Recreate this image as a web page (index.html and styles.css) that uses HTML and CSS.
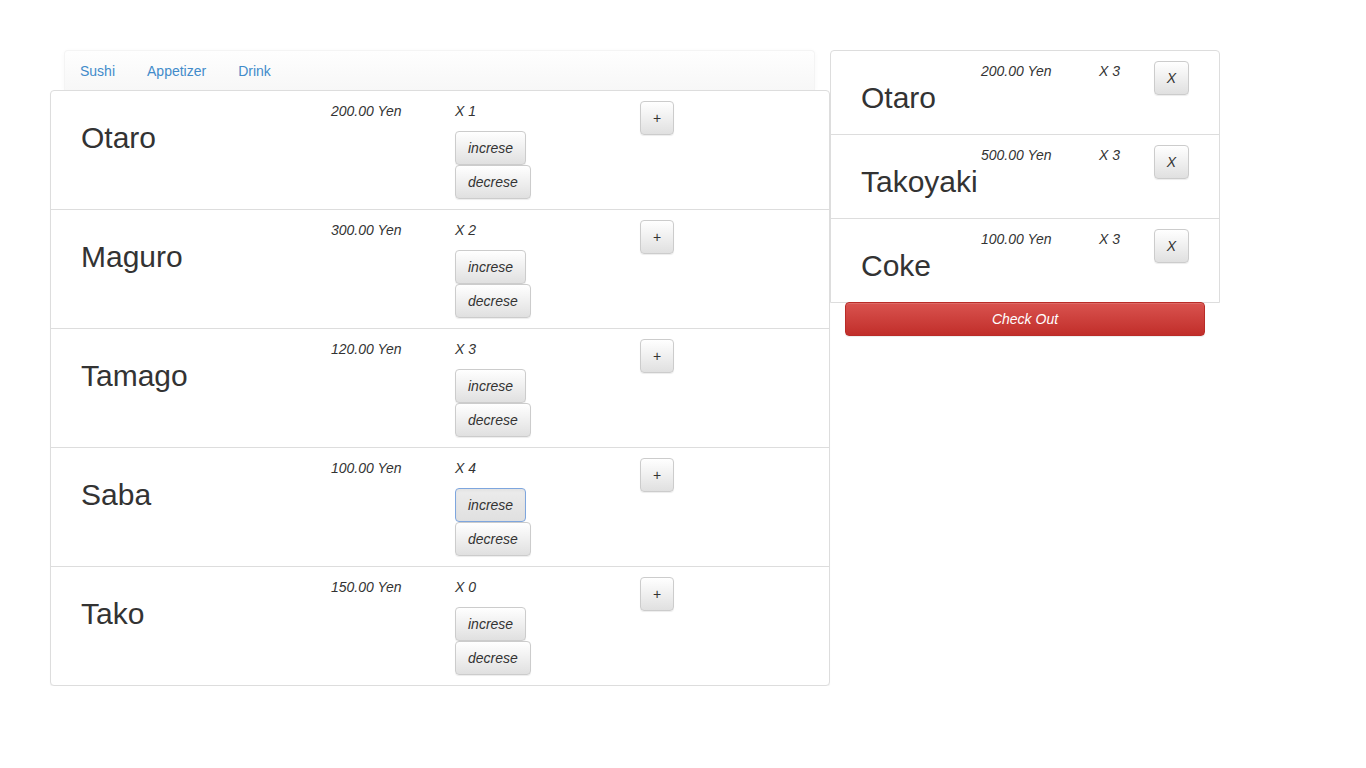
FILE: index.html
```html
<!DOCTYPE html>
<html>
<head>
<meta charset="utf-8">
<link rel="stylesheet" href="styles.css">
</head>
<body>
<div class="page">
  <div class="menu-col">
    <nav class="navbar">
      <a class="nav-link" href="#">Sushi</a>
      <a class="nav-link" href="#">Appetizer</a>
      <a class="nav-link" href="#">Drink</a>
    </nav>
    <div class="panel menu-panel">
      <div class="menu-row">
        <h2 class="item-name">Otaro</h2>
        <p class="price">200.00 Yen</p>
        <div class="qty">
          <p class="qty-text">X 1</p>
          <button class="btn">increse</button>
          <button class="btn">decrese</button>
        </div>
        <div><button class="btn btn-plus">+</button></div>
      </div>
      <div class="menu-row">
        <h2 class="item-name">Maguro</h2>
        <p class="price">300.00 Yen</p>
        <div class="qty">
          <p class="qty-text">X 2</p>
          <button class="btn">increse</button>
          <button class="btn">decrese</button>
        </div>
        <div><button class="btn btn-plus">+</button></div>
      </div>
      <div class="menu-row">
        <h2 class="item-name">Tamago</h2>
        <p class="price">120.00 Yen</p>
        <div class="qty">
          <p class="qty-text">X 3</p>
          <button class="btn">increse</button>
          <button class="btn">decrese</button>
        </div>
        <div><button class="btn btn-plus">+</button></div>
      </div>
      <div class="menu-row">
        <h2 class="item-name">Saba</h2>
        <p class="price">100.00 Yen</p>
        <div class="qty">
          <p class="qty-text">X 4</p>
          <button class="btn btn-focus">increse</button>
          <button class="btn">decrese</button>
        </div>
        <div><button class="btn btn-plus">+</button></div>
      </div>
      <div class="menu-row">
        <h2 class="item-name">Tako</h2>
        <p class="price">150.00 Yen</p>
        <div class="qty">
          <p class="qty-text">X 0</p>
          <button class="btn">increse</button>
          <button class="btn">decrese</button>
        </div>
        <div><button class="btn btn-plus">+</button></div>
      </div>
    </div>
  </div>
  <div class="cart-col">
    <div class="panel cart-panel">
      <div class="cart-row">
        <h2 class="item-name">Otaro</h2>
        <p class="price">200.00 Yen</p>
        <p class="qty-text">X 3</p>
        <div><button class="btn btn-x">X</button></div>
      </div>
      <div class="cart-row">
        <h2 class="item-name">Takoyaki</h2>
        <p class="price">500.00 Yen</p>
        <p class="qty-text">X 3</p>
        <div><button class="btn btn-x">X</button></div>
      </div>
      <div class="cart-row">
        <h2 class="item-name">Coke</h2>
        <p class="price">100.00 Yen</p>
        <p class="qty-text">X 3</p>
        <div><button class="btn btn-x">X</button></div>
      </div>
    </div>
    <button class="btn btn-danger">Check Out</button>
  </div>
</div>
</body>
</html>
```

FILE: styles.css
```css
* { box-sizing: border-box; }

html, body {
  margin: 0;
  padding: 0;
  background: #fff;
}

body {
  font-family: "Liberation Sans", Arial, sans-serif;
  font-size: 14px;
  line-height: 20px;
  color: #333;
}

.page {
  display: flex;
  align-items: flex-start;
  padding: 50px 0 0 50px;
}

.menu-col {
  width: 780px;
  display: flex;
  flex-direction: column;
}

.navbar {
  height: 40px;
  margin: 0 15px 0 14px;
  border: 1px solid #f4f4f4;
  border-bottom: none;
  border-radius: 4px 4px 0 0;
  background: linear-gradient(to bottom, #fefefe 0, #f7f7f7 100%);
  box-shadow: 0 1px 5px rgba(0, 0, 0, 0.03);
  display: flex;
  align-items: flex-start;
  padding: 10px 0 0 0;
}

.nav-link {
  color: #428bca;
  text-decoration: none;
  padding: 0 16px;
  line-height: 20px;
}

.nav-link:first-child {
  padding-left: 15px;
}

.panel {
  background: #fff;
  border: 1px solid #ddd;
  border-radius: 4px;
  box-shadow: 0 1px 1px rgba(0, 0, 0, 0.05);
}

.menu-row {
  display: grid;
  grid-template-columns: 250px 124px 185px 1fr;
  align-items: start;
  padding: 10px 30px;
}

.menu-row + .menu-row,
.cart-row + .cart-row {
  border-top: 1px solid #ddd;
}

.item-name {
  margin: 20px 0 10px;
  font-size: 30px;
  line-height: 33px;
  font-weight: normal;
  color: #333;
  white-space: nowrap;
}

.price,
.qty-text {
  margin: 0;
  font-style: italic;
  line-height: 20px;
}

.qty {
  display: flex;
  flex-direction: column;
  align-items: flex-start;
}

.qty .qty-text {
  margin-bottom: 10px;
}

.btn {
  display: inline-block;
  font-family: "Liberation Sans", Arial, sans-serif;
  font-size: 14px;
  font-style: italic;
  line-height: 20px;
  padding: 6px 12px;
  color: #333;
  border: 1px solid #ccc;
  border-radius: 4px;
  background: linear-gradient(to bottom, #fff 0, #e0e0e0 100%);
  box-shadow: inset 0 1px 0 rgba(255, 255, 255, 0.15), 0 1px 1px rgba(0, 0, 0, 0.075);
  cursor: pointer;
  margin: 0;
}

.btn-plus {
  font-style: normal;
  padding: 6px 12px;
  width: 34px;
  text-align: center;
}

.btn-focus {
  border-color: #7ea6de;
  background: linear-gradient(to bottom, #ececec 0, #e0e0e0 100%);
  box-shadow: inset 0 2px 3px rgba(0, 0, 0, 0.04);
}

.cart-col {
  width: 390px;
  display: flex;
  flex-direction: column;
}

.cart-panel {
  border-radius: 4px 4px 0 0;
  box-shadow: none;
}

.cart-row {
  display: grid;
  grid-template-columns: 120px 118px 55px 1fr;
  align-items: start;
  padding: 10px 30px;
}

.btn-x {
  width: 35px;
  text-align: center;
  padding: 6px 0;
}

.btn-danger {
  margin: -1px 15px 0;
  color: #fff;
  border-color: #b92c28;
  background: linear-gradient(to bottom, #d9534f 0, #c12e2a 100%);
  text-align: center;
}
```
